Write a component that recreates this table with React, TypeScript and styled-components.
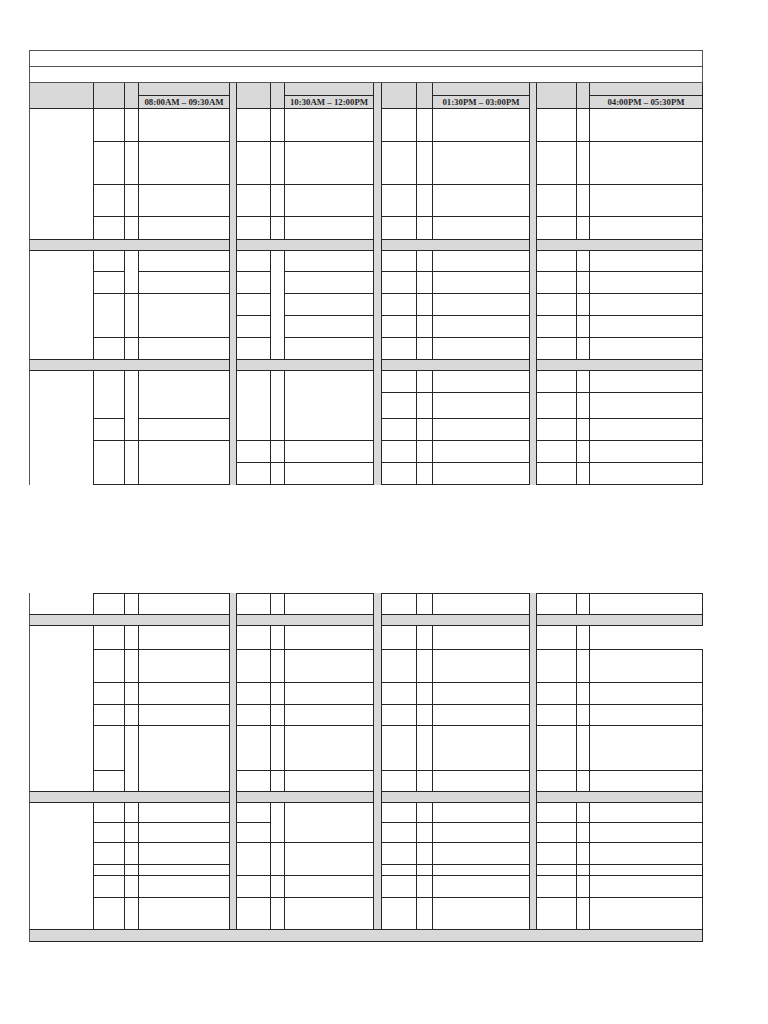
import React from "react";
import styled, { createGlobalStyle, css } from "styled-components";

const LINE = "#262626";
const OUTER = "#555555";
const FILL = "#d9d9d9";

const GlobalStyle = createGlobalStyle`
  html, body { margin: 0; padding: 0; background: #ffffff; }
  body { font-family: "Liberation Serif", "Times New Roman", serif; }
`;

const Page = styled.main`
  display: flex;
  flex-direction: column;
  gap: 108px;
  padding: 50px 0 60px 29px;
`;

const COLS =
  "65px 31px 14px 91px 7px 34px 14px 89px 8px 35px 16px 97px 7px 40px 13px 113px";

const Sheet = styled.section<{ $rows: string }>`
  display: grid;
  grid-template-columns: ${COLS};
  grid-template-rows: ${(p) => p.$rows};
  width: 674px;
`;

type EdgeProps = {
  $col: string;
  $row: string;
  $top?: boolean;
  $left?: boolean;
  $noRight?: boolean;
  $noBottom?: boolean;
};

const edges = css<EdgeProps>`
  grid-column: ${(p) => p.$col};
  grid-row: ${(p) => p.$row};
  box-sizing: border-box;
  border-right: ${(p) => (p.$noRight ? "0" : `1px solid ${LINE}`)};
  border-bottom: ${(p) => (p.$noBottom ? "0" : `1px solid ${LINE}`)};
  border-top: ${(p) => (p.$top ? `1px solid ${LINE}` : "0")};
  border-left: ${(p) => (p.$left ? `1px solid ${OUTER}` : "0")};
`;

const TitleBar = styled.div<EdgeProps>`
  ${edges};
  background: #ffffff;
  border-right-color: ${OUTER};
  border-bottom-color: ${OUTER};
  border-top-color: ${OUTER};
`;

const HeadCell = styled.div<EdgeProps>`
  ${edges};
  background: ${FILL};
`;

const TimeLabel = styled.div<EdgeProps>`
  ${edges};
  background: ${FILL};
  display: flex;
  align-items: center;
  justify-content: center;
  font-family: "Liberation Serif", "Times New Roman", serif;
  font-weight: 700;
  font-size: 8.8px;
  line-height: 12px;
  color: #262626;
  white-space: nowrap;
  overflow: hidden;
`;

const DayCell = styled.div<EdgeProps>`
  ${edges};
  background: #ffffff;
`;

const SlotCell = styled.div<EdgeProps>`
  ${edges};
  background: #ffffff;
`;

const Separator = styled.div<EdgeProps>`
  ${edges};
  background: ${FILL};
`;

const Band = styled.div<EdgeProps>`
  ${edges};
  background: ${FILL};
`;

const GROUP_START = [2, 6, 10, 14];
const GROUP_BANDS = ["1 / 5", "6 / 9", "10 / 13", "14 / 17"];
const SEPARATOR_COLS = [5, 9, 13];
const TIMES = [
  "08:00AM – 09:30AM",
  "10:30AM – 12:00PM",
  "01:30PM – 03:00PM",
  "04:00PM – 05:30PM",
];

type Split = number[];
type Block = {
  id: string;
  span: [number, number];
  groups: Split[][];
  dayOpenBottom?: boolean;
  topEdge?: boolean;
  openRightRow?: number;
};

const range = (a: number, b: number) =>
  Array.from({ length: b - a + 1 }, (_, i) => a + i);
const even = (a: number, b: number): Split[] => [range(a, b), range(a, b), range(a, b)];

const PAGE_ONE_ROWS =
  "17px 16px 13px 13px 33px 43px 32px 23px 11px 21px 22px 22px 22px 22px 11px 22px 26px 22px 22px 22px";
const PAGE_TWO_ROWS =
  "22px 11px 24px 33px 22px 21px 45px 21px 11px 20px 20px 22px 11px 22px 32px 12px";

const pageOneBlocks: Block[] = [
  { id: "b1", span: [5, 9], groups: [even(5, 9), even(5, 9), even(5, 9), even(5, 9)] },
  {
    id: "b2",
    span: [10, 15],
    groups: [
      [[10, 11, 12, 14, 15], [10, 12, 14, 15], [10, 11, 12, 14, 15]],
      [range(10, 15), [10, 15], range(10, 15)],
      even(10, 15),
      even(10, 15),
    ],
  },
  {
    id: "b3",
    span: [16, 21],
    dayOpenBottom: true,
    groups: [
      [[16, 18, 19, 21], [16, 19, 21], [16, 18, 19, 21]],
      [[16, 19, 20, 21], [16, 19, 20, 21], [16, 19, 20, 21]],
      even(16, 21),
      even(16, 21),
    ],
  },
];

const pageTwoBlocks: Block[] = [
  { id: "p0", span: [1, 2], topEdge: true, groups: [even(1, 2), even(1, 2), even(1, 2), even(1, 2)] },
  {
    id: "b4",
    span: [3, 9],
    openRightRow: 3,
    groups: [
      [range(3, 9), [3, 4, 5, 6, 7, 9], [3, 4, 5, 6, 7, 9]],
      even(3, 9),
      even(3, 9),
      even(3, 9),
    ],
  },
  {
    id: "b5",
    span: [10, 16],
    groups: [
      even(10, 16),
      [[10, 11, 12, 14, 15, 16], [10, 12, 14, 15, 16], [10, 12, 14, 15, 16]],
      even(10, 16),
      even(10, 16),
    ],
  },
];

function renderBlock(block: Block) {
  const cells: React.ReactNode[] = [];
  cells.push(
    <DayCell
      key={`${block.id}-day`}
      $col="1 / 2"
      $row={`${block.span[0]} / ${block.span[1]}`}
      $left
      $noBottom={block.dayOpenBottom}
    />
  );
  block.groups.forEach((subs, g) => {
    subs.forEach((split, s) => {
      const col = GROUP_START[g] + s;
      for (let i = 0; i < split.length - 1; i++) {
        const isOpen = g === 3 && s === 2 && block.openRightRow === split[i];
        cells.push(
          <SlotCell
            key={`${block.id}-${g}-${s}-${i}`}
            $col={`${col} / ${col + 1}`}
            $row={`${split[i]} / ${split[i + 1]}`}
            $top={block.topEdge}
            $noRight={isOpen}
          />
        );
      }
    });
  });
  return cells;
}

function renderBands(row: number, key: string) {
  return GROUP_BANDS.map((col, i) => (
    <Band key={`${key}-${i}`} $col={col} $row={`${row} / ${row + 1}`} $left={i === 0} />
  ));
}

function PageOne() {
  return (
    <Sheet $rows={PAGE_ONE_ROWS}>
      <TitleBar $col="1 / 17" $row="1 / 2" $top $left />
      <TitleBar $col="1 / 17" $row="2 / 3" $left />
      <HeadCell $col="1 / 2" $row="3 / 5" $left />
      {GROUP_START.map((start, g) => (
        <React.Fragment key={`head-${g}`}>
          <HeadCell $col={`${start} / ${start + 1}`} $row="3 / 5" />
          <HeadCell $col={`${start + 1} / ${start + 2}`} $row="3 / 5" />
          <HeadCell $col={`${start + 2} / ${start + 3}`} $row="3 / 4" />
          <TimeLabel $col={`${start + 2} / ${start + 3}`} $row="4 / 5">
            {TIMES[g]}
          </TimeLabel>
        </React.Fragment>
      ))}
      {SEPARATOR_COLS.map((c) => (
        <Separator key={`sep-${c}`} $col={`${c} / ${c + 1}`} $row="3 / 21" $noBottom />
      ))}
      {pageOneBlocks.map((b) => renderBlock(b))}
      {renderBands(9, "band9")}
      {renderBands(15, "band15")}
    </Sheet>
  );
}

function PageTwo() {
  return (
    <Sheet $rows={PAGE_TWO_ROWS}>
      {SEPARATOR_COLS.map((c) => (
        <Separator key={`sep2-${c}`} $col={`${c} / ${c + 1}`} $row="1 / 16" />
      ))}
      {pageTwoBlocks.map((b) => renderBlock(b))}
      {renderBands(2, "band2")}
      {renderBands(9, "band9b")}
      <Band $col="1 / 17" $row="16 / 17" $left />
    </Sheet>
  );
}

export default function App() {
  return (
    <>
      <GlobalStyle />
      <Page>
        <PageOne />
        <PageTwo />
      </Page>
    </>
  );
}
